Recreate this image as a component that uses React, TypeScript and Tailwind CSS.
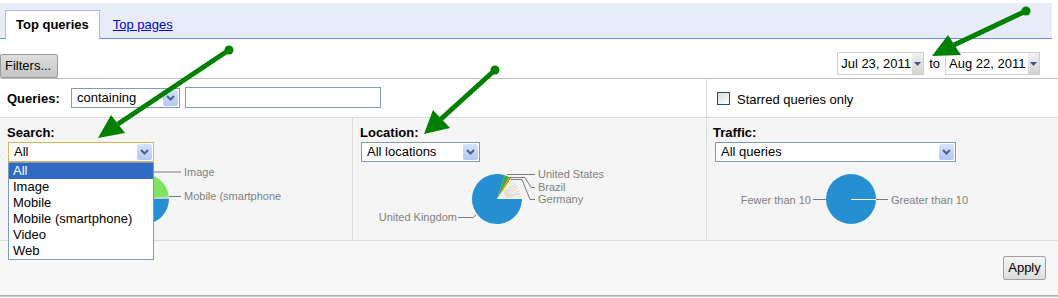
import React from "react";

const PIE_BLUE = "#2490d2";

const arc = (cx: number, cy: number, r: number, a0: number, a1: number) => {
  const rad = (a: number) => (a * Math.PI) / 180;
  const x0 = cx + r * Math.cos(rad(a0));
  const y0 = cy + r * Math.sin(rad(a0));
  const x1 = cx + r * Math.cos(rad(a1));
  const y1 = cy + r * Math.sin(rad(a1));
  const large = a1 - a0 > 180 ? 1 : 0;
  return `M${cx} ${cy} L${x0} ${y0} A${r} ${r} 0 ${large} 1 ${x1} ${y1} Z`;
};

function Chevron() {
  return (
    <svg width="9" height="6" viewBox="0 0 9 6">
      <path d="M1 1 L4.5 4.5 L8 1" fill="none" stroke="#4d6185" strokeWidth="2" />
    </svg>
  );
}

function Select({ text, width, focused }: { text: string; width: number; focused?: boolean }) {
  return (
    <div
      className={`flex h-[20px] items-stretch bg-white p-px border ${focused ? "border-[#e0b358]" : "border-[#7f9db9]"}`}
      style={{ width }}
    >
      <span className="flex-1 pl-[4px] leading-[16px] text-[13px] text-black">{text}</span>
      <span className="flex w-[15px] items-center justify-center rounded-[2px] bg-gradient-to-b from-[#d6e2fd] to-[#b4c8f6]">
        <Chevron />
      </span>
    </div>
  );
}

function DateBox({ text, width }: { text: string; width: number }) {
  return (
    <div className="flex h-[23px] items-stretch border border-[#cfcfcf] bg-white" style={{ width }}>
      <span className="flex-1 pl-[3px] leading-[21px] text-[13px]">{text}</span>
      <span className="flex w-[11px] items-center justify-center bg-gradient-to-b from-[#f2f2f2] to-[#d2d2d2]">
        <svg width="7" height="4" viewBox="0 0 7 4">
          <path d="M0 0 H7 L3.5 4 Z" fill="#3b5488" />
        </svg>
      </span>
    </div>
  );
}

const labelCls = "fill-[#808080] text-[11px]";

function SearchPie() {
  return (
    <svg width="353" height="77" className="block">
      <path d={arc(144, 37, 25, -1, 260)} fill={PIE_BLUE} />
      <path d={arc(144, 37, 25, -100, -6)} fill="#80e35f" />
      <path d={arc(144, 37, 25, -6, -1)} fill="#cfcfcf" />
      <path d="M140 10 H181" stroke="#7a7a7a" />
      <path d="M169 34.5 H181" stroke="#7a7a7a" />
      <text x="184" y="14" className={labelCls}>Image</text>
      <text x="184" y="38" className={labelCls}>Mobile (smartphone</text>
    </svg>
  );
}

function LocationPie() {
  const pastel = ["#f6e27a", "#c9e8a8", "#a9d6f2", "#f4c0cc", "#f9d39a", "#bfe4cf", "#d7c6ef", "#f3ef9e"];
  return (
    <svg width="354" height="77" className="block">
      <path d={arc(144, 37, 25, 0, 288)} fill={PIE_BLUE} />
      <path d={arc(144, 37, 25, -72, -61)} fill="#45a630" />
      <path d={arc(144, 37, 25, -60, -56)} fill="#c48a10" />
      {pastel.map((c, i) => {
        const a = ((-52 + i * 6.5) * Math.PI) / 180;
        return (
          <line
            key={i}
            x1={144 + 9 * Math.cos(a)}
            y1={37 + 9 * Math.sin(a)}
            x2={144 + 24 * Math.cos(a)}
            y2={37 + 24 * Math.sin(a)}
            stroke={c}
            strokeWidth="1"
          />
        );
      })}
      <path d="M154 12.5 H182" stroke="#7a7a7a" fill="none" />
      <path d="M156 15.5 H172 L178 25.5 H182" stroke="#7a7a7a" fill="none" />
      <path d="M158 17.5 H169 L177 37.5 H182" stroke="#7a7a7a" fill="none" />
      <path d="M105 55.5 H120 L123 53" stroke="#7a7a7a" fill="none" />
      <text x="185" y="16" className={labelCls}>United States</text>
      <text x="185" y="29" className={labelCls}>Brazil</text>
      <text x="185" y="41" className={labelCls}>Germany</text>
      <text x="104" y="59" textAnchor="end" className={labelCls}>United Kingdom</text>
    </svg>
  );
}

function TrafficPie() {
  return (
    <svg width="351" height="77" className="block">
      <circle cx="144" cy="37" r="25" fill={PIE_BLUE} />
      <path d="M144 37.5 H169" stroke="#ffffff" />
      <path d="M169 37.5 H181" stroke="#7a7a7a" />
      <path d="M106 37.5 H119" stroke="#7a7a7a" />
      <text x="184" y="42" className={labelCls}>Greater than 10</text>
      <text x="104" y="42" textAnchor="end" className={labelCls}>Fewer than 10</text>
    </svg>
  );
}

function Arrow({ from, mid, head }: { from: [number, number]; mid: [number, number]; head: string }) {
  return (
    <g fill="#008000" stroke="#008000">
      <line x1={from[0]} y1={from[1]} x2={mid[0]} y2={mid[1]} strokeWidth="5" />
      <circle cx={from[0]} cy={from[1]} r="4.5" stroke="none" />
      <polygon points={head} stroke="none" />
    </g>
  );
}

export default function App() {
  return (
    <div className="relative h-[298px] w-[1058px] overflow-hidden bg-white font-['Liberation_Sans',Arial,sans-serif] text-[13px] text-black">
      {/* Tabs */}
      <div className="mr-[6px] mt-[3px] flex h-[36px] items-end border-b border-[#6b90da] bg-[#e8ecf9] pl-[5px]">
        <div className="relative -mb-px flex h-[29px] items-center border border-b-0 border-[#a4bce6] bg-white px-[10px] font-bold">
          Top queries
        </div>
        <a className="mb-[4px] ml-[13px] text-[#0000cc] underline">Top pages</a>
      </div>

      {/* Filters + dates */}
      <div className="flex h-[40px] items-start justify-between border-b border-[#bdbdbd] pr-[18px]">
        <button className="mt-[15px] h-[24px] w-[58px] rounded-[2px] border border-[#9a9a9a] bg-gradient-to-b from-[#dedede] to-[#c4c4c4] pl-[4px] text-left text-[13px]">
          Filters...
        </button>
        <div className="mt-[13px] flex items-center">
          <DateBox text="Jul 23, 2011" width={87} />
          <span className="mx-[5px]">to</span>
          <DateBox text="Aug 22, 2011" width={95} />
        </div>
      </div>

      {/* Queries row */}
      <div className="flex h-[39px] border-b border-[#dcdcdc]">
        <div className="flex w-[707px] items-start border-r border-[#dcdcdc] pl-[7px] pt-[9px]">
          <span className="mt-[1px] w-[64px] font-bold">Queries:</span>
          <Select text="containing" width={109} />
          <div className="-mt-px ml-[5px] h-[21px] w-[196px] border border-[#7f9db9] bg-white" />
        </div>
        <div className="flex items-start pl-[10px] pt-[13px]">
          <span className="h-[13px] w-[13px] border border-[#1c5180] bg-gradient-to-br from-[#dcdcd6] to-white" />
          <span className="ml-[7px] -mt-[2px]">Starred queries only</span>
        </div>
      </div>

      {/* Filter panels */}
      <div className="flex h-[123px] border-b border-[#dcdcdc] bg-[#f5f5f5]">
        <div className="relative w-[353px] border-r border-[#dcdcdc]">
          <div className="pl-[7px] pt-[7px] font-bold leading-[15px]">Search:</div>
          <div className="pl-[8px] pt-[2px]">
            <Select text="All" width={146} focused />
          </div>
          <SearchPie />
          <ul className="absolute left-[8px] top-[44px] w-[146px] border border-[#7f9db9] bg-white">
            {["All", "Image", "Mobile", "Mobile (smartphone)", "Video", "Web"].map((item, i) => (
              <li
                key={item}
                className={`h-[16px] pl-[4px] leading-[16px] ${i === 0 ? "bg-[#316ac5] text-white" : ""}`}
              >
                {item}
              </li>
            ))}
          </ul>
        </div>
        <div className="w-[354px] border-r border-[#dcdcdc]">
          <div className="pl-[7px] pt-[7px] font-bold leading-[15px]">Location:</div>
          <div className="pl-[8px] pt-[2px]">
            <Select text="All locations" width={119} />
          </div>
          <LocationPie />
        </div>
        <div className="flex-1">
          <div className="pl-[6px] pt-[7px] font-bold leading-[15px]">Traffic:</div>
          <div className="pl-[8px] pt-[2px]">
            <Select text="All queries" width={241} />
          </div>
          <TrafficPie />
        </div>
      </div>

      {/* Apply */}
      <div className="flex h-[54px] justify-end bg-[#f7f7f7] pr-[12px]">
        <button className="mt-[15px] h-[24px] w-[43px] rounded-[2px] border border-[#a0a0a0] bg-gradient-to-b from-[#f6f6f6] to-[#dcdcdc] text-[13px]">
          Apply
        </button>
      </div>
      <div className="h-[2px] bg-gradient-to-b from-[#a8a8a8] to-[#d0d0d0]" />

      {/* Annotation arrows */}
      <svg className="pointer-events-none absolute inset-0" width="1058" height="298">
        <Arrow from={[229, 50]} mid={[118, 124]} head="98,138 111,115 125,133" />
        <Arrow from={[495, 70]} mid={[441, 119]} head="424,134 433,110 450,128" />
        <Arrow from={[1026, 11]} mid={[954, 45]} head="932,56 948,35 961,55" />
      </svg>
    </div>
  );
}
